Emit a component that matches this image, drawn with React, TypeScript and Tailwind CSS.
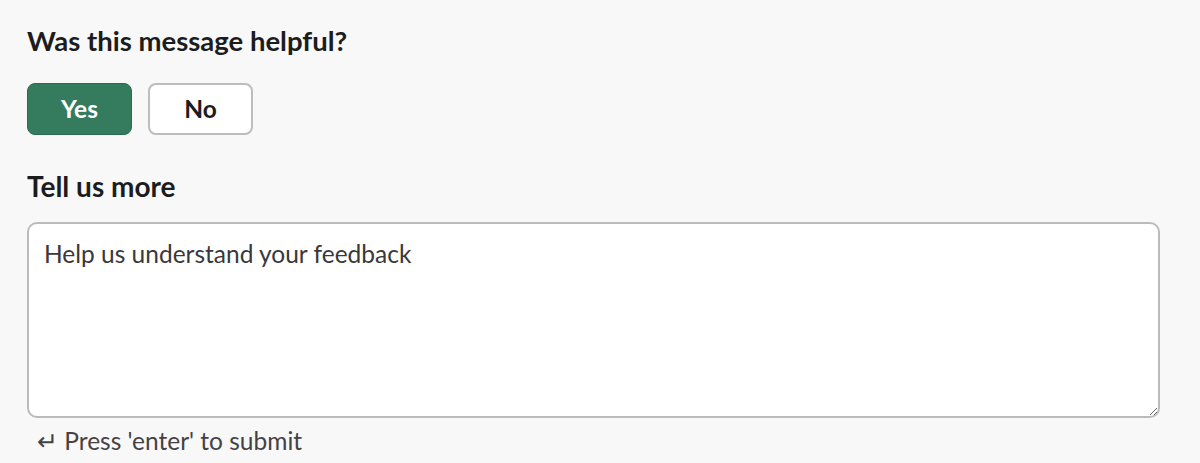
import React from "react";

export default function App() {
  return (
    <div
      className="w-[1200px] h-[463px] bg-[#f8f8f8] overflow-hidden pl-[27px] pt-[24px] pr-[40px] text-[#1d1c1d]"
      style={{ fontFamily: "Lato, 'Liberation Sans', sans-serif" }}
    >
      <h2 className="text-[27.5px] leading-[34px] font-bold">Was this message helpful?</h2>
      <div className="flex gap-[16px] mt-[25px]">
        <button className="w-[105px] h-[52px] rounded-[8px] bg-[#357b5d] border border-[#2c6b50] text-white text-[24.5px] font-bold">
          Yes
        </button>
        <button className="w-[105px] h-[52px] rounded-[8px] bg-white border-2 border-[#bdbdbd] text-[#1d1c1d] text-[24.5px] font-bold">
          No
        </button>
      </div>
      <h3 className="text-[28px] leading-[34px] font-bold mt-[34px]">Tell us more</h3>
      <textarea
        className="block mt-[19px] w-[1133px] h-[196px] rounded-[10px] bg-white border-2 border-[#bbbbbb] px-[15px] py-[15px] text-[24.5px] leading-[30px] placeholder:text-[#3a383a] outline-none"
        style={{ fontFamily: "Lato, 'Liberation Sans', sans-serif" }}
        placeholder="Help us understand your feedback"
      />
      <div className="mt-[8px] ml-[10px] text-[24.5px] leading-[30px] text-[#454245]">
        ↵ Press 'enter' to submit
      </div>
    </div>
  );
}
